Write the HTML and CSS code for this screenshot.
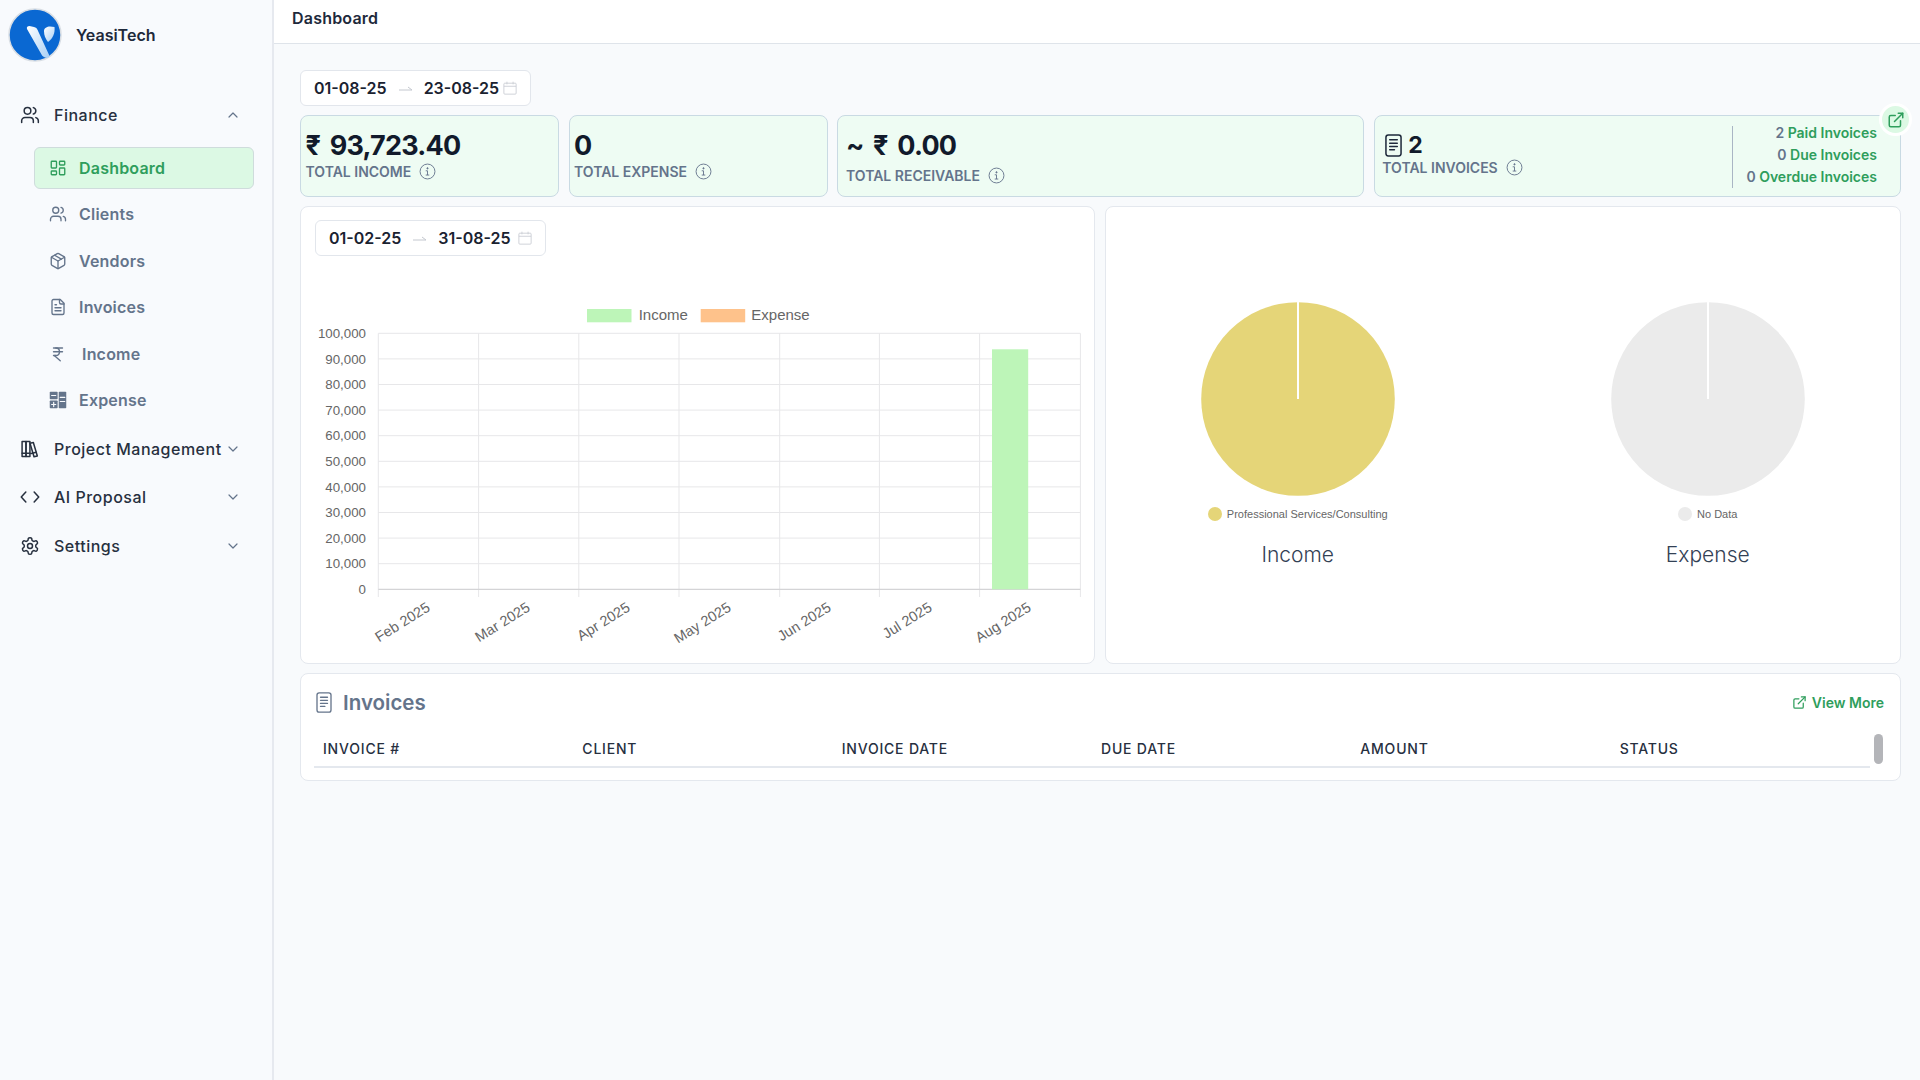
FILE: index.html
```
<!DOCTYPE html>
<html lang="en">

<head>
  <meta charset="UTF-8">
  <title>YeasiTech - Dashboard</title>
  <link rel="stylesheet" href="styles.css">
</head>

<body>
  <!-- Sidebar -->
  <aside class="sidebar">
    <div class="brand">
      <svg class="brand-logo" viewBox="0 0 54 54">
        <defs>
          <linearGradient id="logoGrad" x1="0" y1="0" x2="1" y2="1">
            <stop offset="0" stop-color="#ffffff" />
            <stop offset="1" stop-color="#a9d0f5" />
          </linearGradient>
        </defs>
        <circle cx="27" cy="27" r="26" fill="#0a68d2" stroke="#d9dee4" stroke-width="1.5" />
        <path d="M19 21c-.6-2 .6-3 2.500-3l4.500 1c2 .4 3 1.500 3.600 3l11.500 25c.6 1.500-.4 2.800-2 2.800-1.600 0-3.800-.6-5-2.300Z" fill="url(#logoGrad)" />
        <path d="M36 23c0-3 3-4.500 6-4.500l4.500.4c.8 5.500-1.500 11.500-6.500 15-2.500-3-4-6.500-4-10.900Z" fill="url(#logoGrad)" />
      </svg>
      <span>YeasiTech</span>
    </div>

    <nav class="nav">
      <div class="nav-head">
        <svg class="icon-head" viewBox="0 0 24 24">
          <path d="M16 21v-2a4 4 0 0 0-4-4H6a4 4 0 0 0-4 4v2" />
          <circle cx="9" cy="7" r="4" />
          <path d="M22 21v-2a4 4 0 0 0-3-3.870" />
          <path d="M16 3.130a4 4 0 0 1 0 7.750" />
        </svg>
        <span>Finance</span>
        <svg class="chevron" viewBox="0 0 24 24"><path d="m6 15 6-6 6 6" /></svg>
      </div>

      <div class="sub-list">
        <a class="sub-item active">
          <svg class="icon-sub" viewBox="0 0 24 24">
            <rect x="3" y="3" width="7" height="9" rx="1" />
            <rect x="14" y="3" width="7" height="5" rx="1" />
            <rect x="14" y="12" width="7" height="9" rx="1" />
            <rect x="3" y="16" width="7" height="5" rx="1" />
          </svg>
          Dashboard
        </a>
        <a class="sub-item">
          <svg class="icon-sub" viewBox="0 0 24 24">
            <path d="M16 21v-2a4 4 0 0 0-4-4H6a4 4 0 0 0-4 4v2" />
            <circle cx="9" cy="7" r="4" />
            <path d="M22 21v-2a4 4 0 0 0-3-3.870" />
            <path d="M16 3.130a4 4 0 0 1 0 7.750" />
          </svg>
          Clients
        </a>
        <a class="sub-item">
          <svg class="icon-sub" viewBox="0 0 24 24">
            <path d="M21 8a2 2 0 0 0-1-1.730l-7-4a2 2 0 0 0-2 0l-7 4A2 2 0 0 0 3 8v8a2 2 0 0 0 1 1.730l7 4a2 2 0 0 0 2 0l7-4A2 2 0 0 0 21 16Z" />
            <path d="m3.300 7 8.700 5 8.700-5" />
            <path d="M12 22V12" />
            <path d="m7.500 4.300 9 5.200" />
          </svg>
          Vendors
        </a>
        <a class="sub-item">
          <svg class="icon-sub" viewBox="0 0 24 24">
            <path d="M15 2H6a2 2 0 0 0-2 2v16a2 2 0 0 0 2 2h12a2 2 0 0 0 2-2V7Z" />
            <path d="M14 2v4a2 2 0 0 0 2 2h4" />
            <path d="M10 9H8" />
            <path d="M16 13H8" />
            <path d="M16 17H8" />
          </svg>
          Invoices
        </a>
        <a class="sub-item income-item">
          <svg class="icon-sub" viewBox="0 0 24 24">
            <path d="M6 4h12" />
            <path d="M6 9h12" />
            <path d="m7 14 8 7" />
            <path d="M6 14h3" />
            <path d="M9 14c6.667 0 6.667-10 0-10" />
          </svg>
          Income
        </a>
        <a class="sub-item">
          <svg class="icon-sub icon-fill" viewBox="0 0 24 24">
            <rect x="1" y="1" width="10.500" height="10" rx="1" />
            <rect x="1" y="12.500" width="10.500" height="10.500" rx="1" />
            <rect x="13" y="1" width="10" height="22" rx="1" />
            <path class="tile-mark" d="M3.500 6h5.500M3.500 18h5.500M6.250 15.200v5.600M15 8.500h6M15 14h6" />
          </svg>
          Expense
        </a>
      </div>

      <div class="nav-head">
        <svg class="icon-head" viewBox="0 0 24 24">
          <rect x="2.500" y="3" width="4.700" height="18" />
          <rect x="7.200" y="3" width="4.700" height="18" />
          <path d="m12 5 4-.8 4.800 16.300-4 .9Z" />
          <path d="M2.500 17h9.400M13.500 17.500l6-1.500" />
        </svg>
        <span>Project Management</span>
        <svg class="chevron" viewBox="0 0 24 24"><path d="m6 9 6 6 6-6" /></svg>
      </div>
      <div class="nav-head">
        <svg class="icon-head" viewBox="0 0 24 24">
          <path d="m17 18 5.500-6L17 6" />
          <path d="m7 6-5.500 6L7 18" />
        </svg>
        <span>AI Proposal</span>
        <svg class="chevron" viewBox="0 0 24 24"><path d="m6 9 6 6 6-6" /></svg>
      </div>
      <div class="nav-head">
        <svg class="icon-head" viewBox="0 0 24 24">
          <path d="M12.220 2h-.44a2 2 0 0 0-2 2v.18a2 2 0 0 1-1 1.730l-.43.25a2 2 0 0 1-2 0l-.15-.08a2 2 0 0 0-2.730.73l-.22.38a2 2 0 0 0 .73 2.730l.15.1a2 2 0 0 1 1 1.720v.51a2 2 0 0 1-1 1.740l-.15.09a2 2 0 0 0-.73 2.730l.22.38a2 2 0 0 0 2.730.73l.15-.08a2 2 0 0 1 2 0l.43.25a2 2 0 0 1 1 1.730V20a2 2 0 0 0 2 2h.44a2 2 0 0 0 2-2v-.18a2 2 0 0 1 1-1.730l.43-.25a2 2 0 0 1 2 0l.15.08a2 2 0 0 0 2.730-.73l.22-.39a2 2 0 0 0-.73-2.730l-.15-.08a2 2 0 0 1-1-1.740v-.5a2 2 0 0 1 1-1.740l.15-.09a2 2 0 0 0 .73-2.730l-.22-.38a2 2 0 0 0-2.730-.73l-.15.08a2 2 0 0 1-2 0l-.43-.25a2 2 0 0 1-1-1.730V4a2 2 0 0 0-2-2z" />
          <circle cx="12" cy="12" r="3" />
        </svg>
        <span>Settings</span>
        <svg class="chevron" viewBox="0 0 24 24"><path d="m6 9 6 6 6-6" /></svg>
      </div>
    </nav>
  </aside>

  <!-- Main -->
  <div class="main">
    <header class="topbar">Dashboard</header>

    <div class="content">
      <div class="date-range">
        <span>01-08-25</span>
        <svg class="range-arrow" viewBox="0 0 14 8"><path d="M0 6h13L9 3" /></svg>
        <span>23-08-25</span>
        <svg class="range-cal" viewBox="0 0 16 16">
          <rect x="1" y="2.500" width="14" height="12.500" rx="1" />
          <path d="M1 6h14M4.500 .8v3M11.500 .8v3" />
        </svg>
      </div>

      <!-- Stat cards -->
      <div class="stats">
        <div class="stat-card">
          <div class="stat-value">₹ 93,723.40</div>
          <div class="stat-label">TOTAL INCOME
            <svg class="info" viewBox="0 0 24 24">
              <circle cx="12" cy="12" r="10.500" />
              <path d="M9.500 11H12v6M9.500 17h5" />
              <circle class="info-dot" cx="12" cy="7.500" r=".9" />
            </svg>
          </div>
        </div>
        <div class="stat-card">
          <div class="stat-value">0</div>
          <div class="stat-label">TOTAL EXPENSE
            <svg class="info" viewBox="0 0 24 24">
              <circle cx="12" cy="12" r="10.500" />
              <path d="M9.500 11H12v6M9.500 17h5" />
              <circle class="info-dot" cx="12" cy="7.500" r=".9" />
            </svg>
          </div>
        </div>
        <div class="stat-card receivable">
          <div class="stat-value">~ ₹ 0.00</div>
          <div class="stat-label">TOTAL RECEIVABLE
            <svg class="info" viewBox="0 0 24 24">
              <circle cx="12" cy="12" r="10.500" />
              <path d="M9.500 11H12v6M9.500 17h5" />
              <circle class="info-dot" cx="12" cy="7.500" r=".9" />
            </svg>
          </div>
        </div>
        <div class="stat-card invoices-stat">
          <div class="invoices-left">
            <div class="stat-value">
              <svg class="doc-icon" viewBox="0 0 18 24">
                <rect x="1" y="1" width="16" height="22" rx="2.500" />
                <path d="M5 6h8M5 9.500h8M5 13h8M5 16.500h5" />
              </svg>
              2
            </div>
            <div class="stat-label">TOTAL INVOICES
              <svg class="info" viewBox="0 0 24 24">
                <circle cx="12" cy="12" r="10.500" />
                <path d="M9.500 11H12v6M9.500 17h5" />
                <circle class="info-dot" cx="12" cy="7.500" r=".9" />
              </svg>
            </div>
          </div>
          <div class="invoices-right">
            <div><span class="count">2</span> Paid Invoices</div>
            <div><span class="count">0</span> Due Invoices</div>
            <div><span class="count">0</span> Overdue Invoices</div>
          </div>
          <div class="open-badge">
            <svg viewBox="0 0 24 24">
              <path d="M18 13v6a2 2 0 0 1-2 2H5a2 2 0 0 1-2-2V8a2 2 0 0 1 2-2h6" />
              <path d="M15 3h6v6" />
              <path d="M10 14 21 3" />
            </svg>
          </div>
        </div>
      </div>

      <!-- Charts -->
      <div class="charts">
        <div class="panel bar-panel">
          <div class="date-range">
            <span>01-02-25</span>
            <svg class="range-arrow" viewBox="0 0 14 8"><path d="M0 6h13L9 3" /></svg>
            <span>31-08-25</span>
            <svg class="range-cal" viewBox="0 0 16 16">
              <rect x="1" y="2.500" width="14" height="12.500" rx="1" />
              <path d="M1 6h14M4.500 .8v3M11.500 .8v3" />
            </svg>
          </div>
          <svg class="bar-chart" width="772" height="355" viewBox="0 0 772 355">
            <rect x="272" y="13" width="44.500" height="13.300" fill="#bdf5b8" />
            <text class="legend-text" x="323.700" y="24">Income</text>
            <rect x="385.700" y="13" width="44.500" height="13.300" fill="#fec28b" />
            <text class="legend-text" x="436.300" y="24">Expense</text>

            <g class="grid-y">
              <path d="M63.300 37.300H765.400" />
              <path d="M63.300 62.900H765.400" />
              <path d="M63.300 88.500H765.400" />
              <path d="M63.300 114.100H765.400" />
              <path d="M63.300 139.700H765.400" />
              <path d="M63.300 165.300H765.400" />
              <path d="M63.300 190.900H765.400" />
              <path d="M63.300 216.500H765.400" />
              <path d="M63.300 242.100H765.400" />
              <path d="M63.300 267.700H765.400" />
            </g>
            <g class="grid-x">
              <path d="M63.300 37.300V301" />
              <path d="M163.600 37.300V301" />
              <path d="M263.800 37.300V301" />
              <path d="M364 37.300V301" />
              <path d="M464.700 37.300V301" />
              <path d="M564.400 37.300V301" />
              <path d="M664.600 37.300V301" />
              <path d="M765.400 37.300V301" />
            </g>
            <path class="axis-x" d="M63.300 293.300H765.400" />
            <rect x="677" y="53.300" width="36.200" height="240" fill="#bdf5b8" />

            <g class="tick-y">
              <text x="51" y="42">100,000</text>
              <text x="51" y="67.600">90,000</text>
              <text x="51" y="93.200">80,000</text>
              <text x="51" y="118.800">70,000</text>
              <text x="51" y="144.400">60,000</text>
              <text x="51" y="170">50,000</text>
              <text x="51" y="195.600">40,000</text>
              <text x="51" y="221.200">30,000</text>
              <text x="51" y="246.800">20,000</text>
              <text x="51" y="272.400">10,000</text>
              <text x="51" y="298">0</text>
            </g>
            <g class="tick-x">
              <text transform="translate(116 314) rotate(-32)">Feb 2025</text>
              <text transform="translate(216 314) rotate(-32)">Mar 2025</text>
              <text transform="translate(316 314) rotate(-32)">Apr 2025</text>
              <text transform="translate(417 314) rotate(-32)">May 2025</text>
              <text transform="translate(517 314) rotate(-32)">Jun 2025</text>
              <text transform="translate(618 314) rotate(-32)">Jul 2025</text>
              <text transform="translate(717 314) rotate(-32)">Aug 2025</text>
            </g>
          </svg>
        </div>

        <div class="panel pie-panel">
          <div class="pie-col">
            <svg class="pie" viewBox="0 0 194 194">
              <circle cx="97" cy="97" r="96.800" fill="#e5d578" />
              <path d="M97 0V97" />
            </svg>
            <div class="pie-legend"><i class="dot dot-income"></i>Professional Services/Consulting</div>
            <div class="pie-title">Income</div>
          </div>
          <div class="pie-col">
            <svg class="pie" viewBox="0 0 194 194">
              <circle cx="97" cy="97" r="96.800" fill="#ebebeb" />
              <path d="M97 0V97" />
            </svg>
            <div class="pie-legend"><i class="dot dot-empty"></i>No Data</div>
            <div class="pie-title">Expense</div>
          </div>
        </div>
      </div>

      <!-- Invoices table -->
      <div class="panel invoices-panel">
        <div class="invoices-head">
          <h2>
            <svg viewBox="0 0 18 24">
              <rect x="1" y="1" width="16" height="22" rx="2.500" />
              <path d="M5 6h8M5 9.500h8M5 13h8M5 16.500h5" />
            </svg>
            Invoices
          </h2>
          <a class="view-more">
            <svg viewBox="0 0 24 24">
              <path d="M18 13v6a2 2 0 0 1-2 2H5a2 2 0 0 1-2-2V8a2 2 0 0 1 2-2h6" />
              <path d="M15 3h6v6" />
              <path d="M10 14 21 3" />
            </svg>
            View More
          </a>
        </div>
        <div class="table-wrap">
          <table>
            <thead>
              <tr>
                <th>INVOICE #</th>
                <th>CLIENT</th>
                <th>INVOICE DATE</th>
                <th>DUE DATE</th>
                <th>AMOUNT</th>
                <th>STATUS</th>
              </tr>
            </thead>
          </table>
          <div class="scroll-thumb"></div>
        </div>
      </div>
    </div>
  </div>
</body>

</html>
```

FILE: styles.css
```
:root {
  --green: #2f9e5c;
  --green-light: #dcf9e4;
  --slate: #64748b;
  --dark: #1e293b;
  --line: #e4e8ee;
}

* {
  margin: 0;
  padding: 0;
  box-sizing: border-box;
}

body {
  display: flex;
  height: 1080px;
  overflow: hidden;
  background-color: #f8fafc;
  color: var(--dark);
  font-family: Inter, "Noto Sans", sans-serif;
}

/* sidebar */
.sidebar {
  width: 274px;
  flex-shrink: 0;
  border-right: 2px solid #e6e9ef;
  background-color: #f8fafd;
}

.brand {
  display: flex;
  align-items: center;
  gap: 14px;
  height: 70px;
  padding-left: 8px;
  font-size: 16px;
  font-weight: 600;
}

.brand-logo {
  width: 54px;
  height: 54px;
}

.nav {
  margin-top: 21px;
}

.nav-head {
  display: flex;
  align-items: center;
  height: 48.7px;
  padding-left: 20px;
  font-size: 16px;
  font-weight: 450;
  letter-spacing: 0.5px;
  color: #27303f;
}

.nav-head span {
  flex: 1;
}

.icon-head {
  width: 20px;
  height: 20px;
  margin-right: 14px;
  fill: none;
  stroke: #27303f;
  stroke-width: 1.8;
  stroke-linecap: round;
  stroke-linejoin: round;
}

.chevron {
  width: 16px;
  height: 16px;
  margin-right: 31px;
  fill: none;
  stroke: #64748b;
  stroke-width: 1.8;
  stroke-linecap: round;
  stroke-linejoin: round;
}

.sub-list {
  display: flex;
  flex-direction: column;
  gap: 4.5px;
  margin: 7px 18px 3px 34px;
}

.sub-item {
  display: flex;
  align-items: center;
  gap: 12.5px;
  height: 42px;
  padding-left: 13.5px;
  border: 1px solid transparent;
  border-radius: 6px;
  font-size: 16px;
  font-weight: 600;
  letter-spacing: 0.2px;
  color: var(--slate);
}

.sub-item.active {
  background-color: var(--green-light);
  border-color: #cfdcdc;
  color: var(--green);
}

.income-item {
  gap: 15.5px;
}

.icon-sub {
  width: 18px;
  height: 18px;
  fill: none;
  stroke: currentColor;
  stroke-width: 1.8;
  stroke-linecap: round;
  stroke-linejoin: round;
}

.icon-fill {
  fill: currentColor;
  stroke: none;
}

.icon-fill .tile-mark {
  fill: none;
  stroke: #f8fafd;
  stroke-width: 1.6;
}

/* main column */
.main {
  flex: 1;
  min-width: 0;
  display: flex;
  flex-direction: column;
}

.topbar {
  height: 44px;
  padding: 8px 0 0 18px;
  background-color: white;
  border-bottom: 1px solid #dfe4ea;
  font-size: 16px;
  font-weight: 600;
  letter-spacing: 0.2px;
}

.content {
  padding: 26px 19px 0 26px;
}

.date-range {
  display: inline-flex;
  align-items: center;
  width: 231px;
  height: 36px;
  padding: 0 13px;
  background-color: white;
  border: 1px solid #e2e6ec;
  border-radius: 6px;
  font-size: 16px;
  font-weight: 600;
  color: #1a2230;
}

.range-arrow {
  width: 14px;
  height: 8px;
  margin: 0 11px 0 12px;
  fill: none;
  stroke: #c4c8cf;
  stroke-width: 1;
}

.range-cal {
  width: 14px;
  height: 14px;
  margin-left: auto;
  fill: none;
  stroke: #c9cdd3;
  stroke-width: 1;
}

/* stat cards */
.stats {
  display: grid;
  grid-template-columns: 259px 259px 1fr 1fr;
  gap: 9.5px;
  height: 82px;
  margin-top: 9px;
}

.stat-card {
  position: relative;
  padding: 13px 4.5px 0;
  background-color: #eefcf3;
  border: 1px solid #c9dae3;
  border-radius: 8px;
}

.stat-value {
  display: flex;
  align-items: center;
  gap: 6px;
  height: 32px;
  font-size: 27px;
  font-weight: 700;
  letter-spacing: -0.8px;
  word-spacing: 4px;
  color: #111a2b;
}

.stat-label {
  display: flex;
  align-items: center;
  gap: 8px;
  height: 20px;
  font-size: 14px;
  font-weight: 600;
  color: var(--slate);
}

.info {
  width: 17px;
  height: 17px;
  fill: none;
  stroke: var(--slate);
  stroke-width: 1.3;
}

.info-dot {
  fill: var(--slate);
}

.receivable {
  padding-left: 8px;
}

.receivable .stat-label {
  margin-top: 4px;
}

.invoices-stat {
  display: flex;
  justify-content: space-between;
  padding: 13px 23px 0 7.5px;
}

.doc-icon {
  width: 17px;
  height: 23px;
  margin-left: 3px;
  fill: none;
  stroke: #1e293b;
  stroke-width: 1.6;
  stroke-linecap: round;
}

.invoices-stat .stat-value {
  font-size: 23px;
}

.invoices-left .stat-label {
  margin-top: -4px;
}

.invoices-right {
  display: flex;
  flex-direction: column;
  justify-content: center;
  height: 62px;
  margin-top: -3px;
  padding: 0 0 4px 13px;
  border-left: 1px solid #a9b5c4;
  text-align: right;
  font-size: 14px;
  font-weight: 600;
  line-height: 22px;
  color: var(--green);
}

.count {
  color: var(--slate);
}

.open-badge {
  position: absolute;
  top: -13px;
  right: -12px;
  display: flex;
  align-items: center;
  justify-content: center;
  width: 33px;
  height: 33px;
  background-color: var(--green-light);
  border: 3px solid white;
  border-radius: 50%;
}

.open-badge svg {
  width: 18px;
  height: 18px;
  fill: none;
  stroke: var(--green);
  stroke-width: 2;
  stroke-linecap: round;
  stroke-linejoin: round;
}

/* chart panels */
.panel {
  background-color: white;
  border: 1px solid var(--line);
  border-radius: 8px;
}

.charts {
  display: grid;
  grid-template-columns: 795px minmax(0, 1fr);
  gap: 9.5px;
  height: 458px;
  margin-top: 9px;
}

.bar-panel {
  padding: 13px 14px 0;
}

.bar-chart {
  display: block;
  margin-top: 40px;
}

.legend-text {
  font-family: "Liberation Sans", sans-serif;
  font-size: 15px;
  fill: #666;
}

.grid-y path,
.grid-x path {
  fill: none;
  stroke: #e7e7e9;
  stroke-width: 1;
}

.axis-x {
  fill: none;
  stroke: #d4d4d6;
  stroke-width: 1.2;
}

.tick-y text {
  font-family: "Liberation Sans", sans-serif;
  font-size: 13.3px;
  fill: #666;
  text-anchor: end;
}

.tick-x text {
  font-family: "Liberation Sans", sans-serif;
  font-size: 14.5px;
  fill: #666;
  text-anchor: end;
}

.pie-panel {
  display: flex;
  justify-content: center;
  padding-top: 95px;
}

.pie-col {
  flex: 0 0 410px;
  display: flex;
  flex-direction: column;
  align-items: center;
}

.pie {
  width: 194px;
  height: 194px;
}

.pie path {
  fill: none;
  stroke: white;
  stroke-width: 2;
}

.pie-legend {
  display: flex;
  align-items: center;
  gap: 5px;
  height: 16px;
  margin-top: 10px;
  font-family: "Liberation Sans", sans-serif;
  font-size: 11px;
  color: #666;
}

.dot {
  width: 14px;
  height: 14px;
  border-radius: 50%;
}

.dot-income {
  background-color: #e5d578;
}

.dot-empty {
  background-color: #ebebeb;
}

.pie-title {
  margin-top: 20px;
  font-size: 21px;
  font-weight: 300;
  color: #334155;
}

/* invoices table */
.invoices-panel {
  height: 108px;
  margin-top: 9px;
  padding: 0 13px;
}

.invoices-head {
  display: flex;
  align-items: center;
  justify-content: space-between;
  height: 57px;
  padding: 0 3px 0 2px;
}

.invoices-head h2 {
  display: flex;
  align-items: center;
  gap: 11px;
  font-size: 20.5px;
  font-weight: 600;
  color: var(--slate);
}

.invoices-head h2 svg {
  width: 16px;
  height: 21px;
  fill: none;
  stroke: var(--slate);
  stroke-width: 1.5;
  stroke-linecap: round;
}

.view-more {
  display: flex;
  align-items: center;
  gap: 5px;
  font-size: 14px;
  font-weight: 600;
  color: var(--green);
}

.view-more svg {
  width: 15px;
  height: 15px;
  fill: none;
  stroke: var(--green);
  stroke-width: 2;
  stroke-linecap: round;
  stroke-linejoin: round;
}

.table-wrap {
  display: flex;
  align-items: flex-start;
  gap: 4px;
  margin-top: 3px;
  padding-right: 4px;
}

table {
  flex: 1;
  width: 100%;
  min-width: 0;
  table-layout: fixed;
  border-collapse: collapse;
}

th {
  height: 33px;
  padding: 0 0 4px 9px;
  border-bottom: 2px solid var(--line);
  text-align: left;
  font-size: 14px;
  font-weight: 500;
  letter-spacing: 0.8px;
  color: #27303f;
}

.scroll-thumb {
  flex-shrink: 0;
  width: 9px;
  height: 30px;
  background-color: #b4b5b9;
  border-radius: 4.5px;
}
```
